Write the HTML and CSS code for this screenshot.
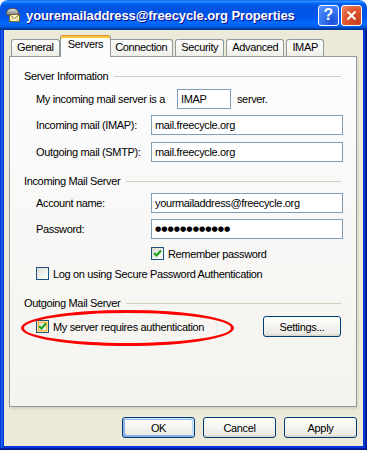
FILE: index.html
```html
<!DOCTYPE html>
<html lang="en">
<head>
    <meta charset="UTF-8">
    <title>youremailaddress@freecycle.org Properties</title>
    <link rel="stylesheet" href="styles.css">
</head>
<body>
    <div class="window">
        <div class="titlebar">
            <svg class="app-icon" width="16" height="16" viewBox="0 0 16 16">
                <defs>
                    <linearGradient id="disc" x1="0" y1="0" x2="0" y2="1">
                        <stop offset="0" stop-color="#e8e8e8"/>
                        <stop offset="1" stop-color="#7a7a7a"/>
                    </linearGradient>
                </defs>
                <path d="M1.5 6.5 C1.5 2.5 4 1.5 7.5 1.5 C11 1.5 13.5 2.5 13.5 6.5 L13.5 8 L1.5 8 Z" fill="url(#disc)" stroke="#4a4a4a" stroke-width="1"/>
                <rect x="4.5" y="7.5" width="10" height="7" fill="#fff6c4" stroke="#7b6a3a"/>
                <path d="M4.5 7.5 L9.5 11.5 L14.5 7.5" fill="none" stroke="#7b6a3a"/>
                <path d="M5 14 L8.5 11 M14 14 L10.5 11" stroke="#c9b66a"/>
            </svg>
            <span class="title">youremailaddress@freecycle.org Properties</span>
            <div class="caption-buttons">
                <span class="cap-btn help">?</span>
                <span class="cap-btn close">
                    <svg width="11" height="11" viewBox="0 0 11 11">
                        <path d="M1.5 1.5 L9.5 9.5 M9.5 1.5 L1.5 9.5" stroke="#fff" stroke-width="2"/>
                    </svg>
                </span>
            </div>
        </div>

        <div class="frame">
            <div class="client">
                <div class="tabs">
                    <div class="tab">General</div>
                    <div class="tab active">Servers</div>
                    <div class="tab">Connection</div>
                    <div class="tab">Security</div>
                    <div class="tab">Advanced</div>
                    <div class="tab">IMAP</div>
                </div>

                <div class="panel">
                    <div class="heading"><span>Server Information</span></div>
                    <div class="row first">
                        <span>My incoming mail server is a</span>
                        <span class="field field-small">IMAP</span>
                        <span class="after">server.</span>
                    </div>
                    <div class="row">
                        <span class="label">Incoming mail (IMAP):</span>
                        <span class="field">mail.freecycle.org</span>
                    </div>
                    <div class="row gap7">
                        <span class="label">Outgoing mail (SMTP):</span>
                        <span class="field">mail.freecycle.org</span>
                    </div>

                    <div class="heading section">
                        <span>Incoming Mail Server</span>
                    </div>
                    <div class="row account">
                        <span class="label">Account name:</span>
                        <span class="field">yourmailaddress@freecycle.org</span>
                    </div>
                    <div class="row">
                        <span class="label">Password:</span>
                        <span class="field password">●●●●●●●●●●●●</span>
                    </div>
                    <div class="check-row remember">
                        <span class="check">
                            <svg width="11" height="11" viewBox="0 0 11 11"><path d="M2 5 L4.5 7.5 L9 2.5" fill="none" stroke="#21a121" stroke-width="2.2"/></svg>
                        </span>
                        <span>Remember password</span>
                    </div>
                    <div class="check-row spa">
                        <span class="check"></span>
                        <span>Log on using Secure Password Authentication</span>
                    </div>

                    <div class="heading section last">
                        <span>Outgoing Mail Server</span>
                    </div>
                    <div class="auth-row">
                        <span class="check hot">
                            <svg width="11" height="11" viewBox="0 0 11 11"><path d="M2 5 L4.5 7.5 L9 2.5" fill="none" stroke="#21a121" stroke-width="2.2"/></svg>
                        </span>
                        <span>My server requires authentication</span>
                        <span class="btn settings">Settings...</span>
                    </div>

                    <div class="annotation"></div>
                </div>

                <div class="buttons">
                    <span class="btn default">OK</span>
                    <span class="btn">Cancel</span>
                    <span class="btn">Apply</span>
                </div>
            </div>
        </div>
    </div>
</body>
</html>
```

FILE: styles.css
```css
* {
    box-sizing: border-box;
}

body {
    margin: 0;
    background: #fff;
    font-family: 'Liberation Sans', Arial, sans-serif;
    font-size: 11px;
    letter-spacing: -0.35px;
    color: #000;
}

.window {
    width: 367px;
    height: 450px;
    display: flex;
    flex-direction: column;
}

.titlebar {
    height: 30px;
    display: flex;
    align-items: center;
    padding: 0 5px 0 5px;
    border-radius: 8px 8px 0 0;
    background: linear-gradient(to bottom, #0058ee 0%, #3593ff 4%, #288eff 6%, #127dff 8%, #036ffc 10%, #0262ee 14%, #0057e5 20%, #0054e3 24%, #0055eb 56%, #005bf5 66%, #026afe 76%, #0062ef 86%, #0052d6 92%, #0040ab 94%, #003092 100%);
}

.app-icon {
    flex-shrink: 0;
}

.title {
    margin-left: 5px;
    color: #fff;
    font-weight: bold;
    font-size: 13px;
    letter-spacing: -0.1px;
    text-shadow: 1px 1px #0f1089;
    white-space: nowrap;
}

.caption-buttons {
    margin-left: auto;
    display: flex;
    gap: 2px;
}

.cap-btn {
    width: 21px;
    height: 21px;
    border: 1px solid #fff;
    border-radius: 3px;
    display: flex;
    align-items: center;
    justify-content: center;
    color: #fff;
    font-weight: bold;
    font-size: 16px;
    letter-spacing: 0;
}

.help {
    background: radial-gradient(circle at 70% 80%, #1a4fd6 0%, #3a7cf5 60%, #5d97fa 100%);
}

.close {
    background: radial-gradient(circle at 80% 80%, #c8401a 0%, #e0562e 55%, #ef8a6a 100%);
}

.frame {
    flex: 1;
    padding: 0 4px 4px;
    background: #0831d9;
    box-shadow: inset -1px -1px #00138c, inset 1px 0 #0831d9, inset -2px -2px #001ea0, inset 2px 0 #166aee, inset -3px -3px #003bda, inset 3px 0 #0855dd;
}

.client {
    height: 100%;
    background: #ece9d8;
    padding: 5px 6px 8px 5px;
    display: flex;
    flex-direction: column;
}

/* tab strip */
.tabs {
    height: 21px;
    display: flex;
    align-items: flex-end;
    padding-left: 2px;
}

.tab {
    height: 17px;
    padding: 0 5px;
    margin-right: 2px;
    line-height: 15px;
    border: 1px solid #919b9c;
    border-bottom: none;
    border-radius: 3px 3px 0 0;
    background: linear-gradient(to bottom, #fff, #fafaf9 26%, #f0f0ea 95%, #ecebe5);
}

.tab.active {
    height: 22px;
    margin: 0 0 -1px -2px;
    padding: 0 7px;
    line-height: 17px;
    border-top: 1px solid #e68b2c;
    box-shadow: inset 0 2px #ffc73c;
    background: #fcfcfe;
    position: relative;
    z-index: 1;
}

.tab.active + .tab {
    margin-left: -2px;
}

/* panel */
.panel {
    flex: 1;
    position: relative;
    border: 1px solid #919b9c;
    background: linear-gradient(to bottom, #fcfcfe, #f4f3ee);
    box-shadow: 1px 2px 2px 0 rgba(208, 206, 191, 0.75);
    padding: 12px 13px 0 14px;
}

.heading {
    height: 13px;
    display: flex;
    align-items: center;
    white-space: nowrap;
}

.heading::after {
    content: "";
    flex: 1;
    margin: 1px 2px 0 6px;
    border-top: 1px solid #d0d0bf;
}

.heading.section {
    margin-top: 12px;
}

.heading.last {
    margin-top: 16px;
}

.row {
    height: 20px;
    margin-top: 6px;
    padding-left: 12px;
    display: flex;
    align-items: center;
    white-space: nowrap;
}

.row.first {
    margin-top: 7px;
}

.row.gap7 {
    margin-top: 7px;
}

.label {
    width: 115px;
    flex-shrink: 0;
}

.field {
    flex: 1;
    height: 20px;
    line-height: 18px;
    padding-left: 3px;
    border: 1px solid #7f9db9;
    background: #fff;
}

.field-small {
    flex: none;
    width: 54px;
    margin-left: 12px;
}

.after {
    margin-left: 6px;
}

.password {
    font-family: 'DejaVu Sans', sans-serif;
    font-size: 7.2px;
    letter-spacing: 0;
    line-height: 18px;
}

.check-row {
    height: 13px;
    display: flex;
    align-items: center;
    gap: 4px;
    white-space: nowrap;
}

.remember {
    margin-top: 8px;
    padding-left: 127px;
}

.spa {
    margin-top: 7px;
    padding-left: 12px;
}

.check {
    width: 13px;
    height: 13px;
    flex-shrink: 0;
    border: 1px solid #1c5180;
    background: linear-gradient(135deg, #dcdcd7, #fff);
    display: flex;
    align-items: center;
    justify-content: center;
}

.check.hot {
    box-shadow: inset 0 0 0 1px #fce49a, inset 0 0 0 2px #f8b636;
}

.auth-row {
    height: 21px;
    margin-top: 7px;
    padding-left: 12px;
    display: flex;
    align-items: center;
    gap: 4px;
    white-space: nowrap;
}

.btn {
    width: 73px;
    height: 21px;
    display: flex;
    align-items: center;
    justify-content: center;
    border: 1px solid #003c74;
    border-radius: 3px;
    background: linear-gradient(to bottom, #fff, #ecebe6 86%, #d6d0c5);
}

.btn.settings {
    width: 78px;
    margin: 0 2px 0 auto;
}

.btn.default {
    box-shadow: inset -1px 1px #cee7ff, inset 1px 2px #98b8ea, inset -2px 2px #bcd4f6, inset 1px -1px #89ade4, inset 2px -2px #89ade4;
}

.buttons {
    margin-top: 10px;
    display: flex;
    justify-content: flex-end;
    gap: 8px;
}

/* red ellipse drawn over the screenshot */
.annotation {
    position: absolute;
    left: 11px;
    top: 253px;
    width: 213px;
    height: 36px;
    border: 3px solid #f00;
    border-radius: 50%;
}
```
